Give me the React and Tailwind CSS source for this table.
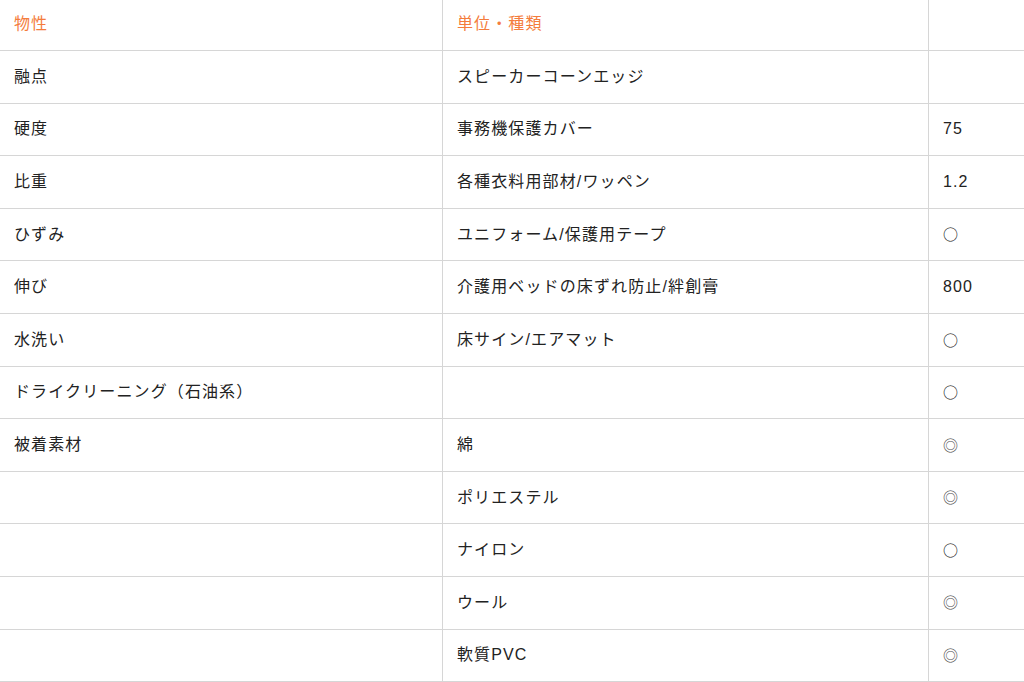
import React from "react";

const rows = [
  ["融点", "スピーカーコーンエッジ", ""],
  ["硬度", "事務機保護カバー", "75"],
  ["比重", "各種衣料用部材/ワッペン", "1.2"],
  ["ひずみ", "ユニフォーム/保護用テープ", "○"],
  ["伸び", "介護用ベッドの床ずれ防止/絆創膏", "800"],
  ["水洗い", "床サイン/エアマット", "○"],
  ["ドライクリーニング（石油系）", "", "○"],
  ["被着素材", "綿", "◎"],
  ["", "ポリエステル", "◎"],
  ["", "ナイロン", "○"],
  ["", "ウール", "◎"],
  ["", "軟質PVC", "◎"],
];

function Cell({ children, first, header }) {
  return (
    <div
      className={
        "h-[52.6px] flex items-center px-[14px] border-b border-[#d6d6d6] whitespace-nowrap overflow-hidden " +
        (first ? "" : "border-l ") +
        (header ? "text-[#f47c3c]" : "text-[#222222]")
      }
    >
      {children}
    </div>
  );
}

function Mark({ v }) {
  if (v === "○" || v === "◎") {
    return (
      <span
        className={
          "text-[15px] tracking-normal " +
          (v === "◎" ? "text-[#4a4a4a]" : "text-[#111111]")
        }
        style={{ fontFamily: '"Noto Sans CJK JP", sans-serif' }}
      >
        {v}
      </span>
    );
  }
  return v;
}

export default function App() {
  return (
    <div
      className="w-[1024px] h-[682px] overflow-hidden bg-white text-[16px] tracking-[0.07em]"
      style={{ fontFamily: '"Liberation Sans", "Noto Sans CJK JP", sans-serif' }}
    >
      <div className="-mt-[1.6px] grid grid-cols-[442px_486px_96px]">
        <Cell first header>物性</Cell>
        <Cell header>単位・種類</Cell>
        <Cell header></Cell>
        {rows.map((r, i) => (
          <React.Fragment key={i}>
            <Cell first>{r[0]}</Cell>
            <Cell>{r[1]}</Cell>
            <Cell>
              <Mark v={r[2]} />
            </Cell>
          </React.Fragment>
        ))}
      </div>
    </div>
  );
}
